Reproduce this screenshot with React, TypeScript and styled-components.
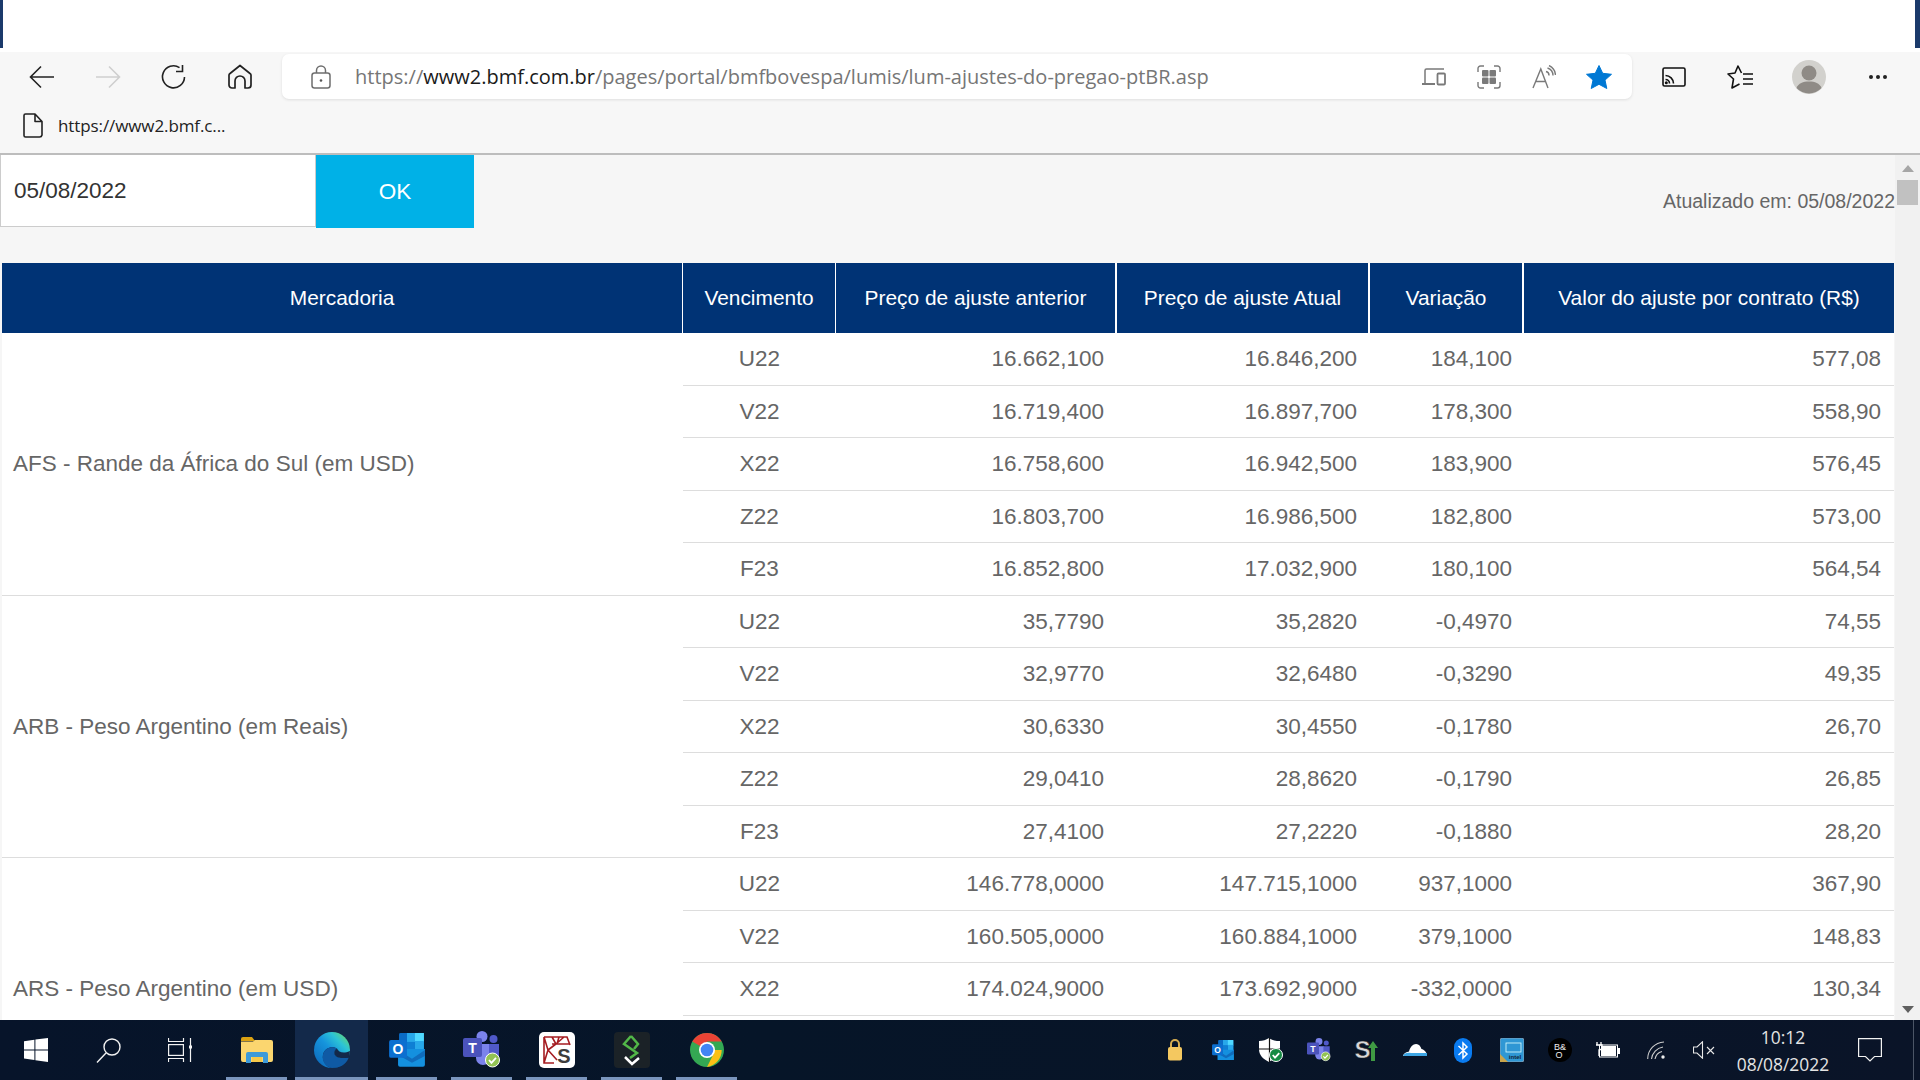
import React from 'react';
import styled, { createGlobalStyle } from 'styled-components';

const Global = createGlobalStyle`
  html, body { margin: 0; padding: 0; background: #fff; }
  * { box-sizing: border-box; }
`;

const Page = styled.div`
  width: 1920px; height: 1080px; display: flex; flex-direction: column; overflow: hidden;
  font-family: "Liberation Sans", Arial, sans-serif; background: #f6f6f6;
`;
const TitleStrip = styled.div`
  height: 52px; background: #fff; display: flex; justify-content: space-between; align-items: flex-start;
`;
const WindowEdge = styled.div<{ $w: number }>`
  width: ${p => p.$w}px; height: 48px; background: #1b3a6b;
`;
const Toolbar = styled.div`
  height: 50px; background: #f7f7f7; display: flex; align-items: flex-start; padding: 2px 0 0 9px;
`;
const NavButton = styled.div<{ $w?: number }>`
  width: ${p => p.$w ?? 66}px; height: 45px; display: flex; align-items: center; justify-content: center; flex: none;
`;
const AddressBar = styled.div`
  width: 1350px; height: 45px; margin: 0 9px; background: #fff; border-radius: 7px; flex: none;
  display: flex; align-items: center; box-shadow: 0 1px 3px rgba(0,0,0,.1); padding: 0 6px 0 20px;
`;
const LockCell = styled.div`
  width: 53px; display: flex; align-items: center; flex: none; padding-left: 9px;
`;
const UrlText = styled.div`
  flex: 1; font-family: "Open Sans", sans-serif; font-size: 20px; color: #767676; white-space: nowrap;
`;
const UrlHost = styled.span`
  color: #1a1a1a;
`;
const AddressAction = styled.div`
  width: 55px; height: 45px; display: flex; align-items: center; justify-content: center; flex: none;
`;
const FavBar = styled.div`
  height: 53px; background: #f7f7f7; display: flex; align-items: center; padding: 0 0 5px 23px; gap: 15px;
  border-bottom: 2px solid #bdbdbd;
`;
const FavText = styled.span`
  font-family: "Open Sans", sans-serif; font-size: 17px; color: #222; letter-spacing: -0.1px;
`;
const Viewport = styled.div`
  flex: 1; display: flex; min-height: 0; overflow: hidden;
`;
const Content = styled.div`
  width: 1895px; flex: none; background: #f6f6f6; overflow: hidden;
`;
const DateRow = styled.div`
  height: 108px; display: flex; align-items: flex-start;
`;
const DateInput = styled.div`
  width: 316px; height: 72px; background: #fff; border: 1px solid #ccc; border-top: 0; font-size: 22.5px; color: #333;
  display: flex; align-items: center; padding-left: 13px;
`;
const OkButton = styled.div`
  width: 158px; height: 73px; background: #00b1e7; color: #fff; font-size: 22.5px;
  display: flex; align-items: center; justify-content: center;
`;
const Updated = styled.div`
  margin-left: auto; padding-top: 33px; font-size: 19.5px; line-height: 26px; color: #666;
`;
const DataTable = styled.table`
  margin-left: 2px; width: 1892px; table-layout: fixed; border-collapse: separate; border-spacing: 0; background: #fff;
`;
const Th = styled.th<{ $rule: number }>`
  height: 70px; padding: 0; background: #003375; color: #fff; font-size: 20.9px; font-weight: 400; text-align: center;
  border-right: ${p => p.$rule}px solid #fff;
`;
const LabelCell = styled.td`
  padding: 1px 0 0 11px; font-size: 22.5px; color: #666; border-bottom: 1px solid #ddd; vertical-align: middle;
`;
const Row = styled.tr`
  height: 52.5px;
`;
const VencCell = styled.td`
  height: 52.5px; padding: 1px 0 0; font-size: 22.5px; color: #666; text-align: center; border-bottom: 1px solid #ddd;
`;
const Cell = styled.td<{ $pad: number }>`
  height: 52.5px; padding: 1px ${p => p.$pad}px 0 0; font-size: 22.5px; color: #666; text-align: right;
  border-bottom: 1px solid #ddd;
`;
const ScrollTrack = styled.div`
  flex: 1; background: #f1f1f1; display: flex; flex-direction: column; align-items: center; justify-content: space-between;
  padding: 10px 0 7px;
`;
const ScrollTop = styled.div`
  display: flex; flex-direction: column; align-items: center; gap: 8px;
`;
const ScrollThumb = styled.div`
  width: 21px; height: 25px; background: #c1c1c1;
`;
const ArrowUp = styled.div`
  width: 0; height: 0; border-left: 6px solid transparent; border-right: 6px solid transparent; border-bottom: 7px solid #a6a6a6;
`;
const ArrowDown = styled.div`
  width: 0; height: 0; border-left: 6px solid transparent; border-right: 6px solid transparent; border-top: 7px solid #606060;
`;
const Taskbar = styled.div`
  height: 60px; flex: none; background: linear-gradient(90deg, #07142a, #061528 40%, #0a1428); display: flex; align-items: stretch;
`;
const SystemButton = styled.div`
  width: 72px; display: flex; align-items: center; justify-content: center;
`;
const AppGap = styled.div`
  width: 3px;
`;
const AppTile = styled.div<{ $active?: boolean }>`
  position: relative; width: 73px; margin: 0 1px; display: flex; align-items: center; justify-content: center;
  background: ${p => (p.$active ? '#13294a' : 'transparent')};
`;
const Indicator = styled.div<{ $active?: boolean }>`
  position: absolute; bottom: 0; left: ${p => (p.$active ? 0 : '6px')}; right: ${p => (p.$active ? 0 : '6px')};
  height: 3px; background: #7a95bd;
`;
const TrayGap = styled.div`
  flex: 1;
`;
const TrayItem = styled.div`
  width: 48.1px; display: flex; align-items: center; justify-content: center; flex: none;
`;
const Clock = styled.div`
  width: 110px; flex: none; display: flex; flex-direction: column; align-items: center; justify-content: center;
  font-family: "Open Sans", sans-serif; font-size: 17.4px; line-height: 27px; color: #e4e4e4; padding-top: 1px;
`;
const NotifyButton = styled.div`
  width: 64px; flex: none; display: flex; align-items: center; justify-content: center;
`;
const DesktopEdge = styled.div`
  width: 1px; margin: 0 6px 0 11px; background: #4b5566;
`;

const Back = () => (
  <svg width="26" height="24" viewBox="0 0 26 24" fill="none" stroke="#222" strokeWidth="1.6"><path d="M1.5 12H25M12 1.5 1.5 12 12 22.5" /></svg>
);
const Forward = () => (
  <svg width="26" height="24" viewBox="0 0 26 24" fill="none" stroke="#cfcfcf" strokeWidth="1.6"><path d="M24.5 12H1M14 1.5 24.5 12 14 22.5" /></svg>
);
const Reload = () => (
  <svg width="26" height="26" viewBox="0 0 26 26" fill="none" stroke="#222" strokeWidth="1.6"><path d="M23.5 13A11 11 0 1 1 18.5 3.6M21.5 1v6.5H15" /></svg>
);
const Home = () => (
  <svg width="24" height="26" viewBox="0 0 24 26" fill="none" stroke="#222" strokeWidth="1.7" strokeLinejoin="round"><path d="M12 1.5 22 9.5a2 2 0 0 1 1 2V21a3 3 0 0 1-3 3h-3V17a5 5 0 0 0-10 0v7H4a3 3 0 0 1-3-3V11.500a2 2 0 0 1 1-2Z" /></svg>
);
const Lock = () => (
  <svg width="20" height="24" viewBox="0 0 20 24" fill="none" stroke="#6e6e6e" strokeWidth="1.5"><rect x="1" y="8" width="18" height="15" rx="2.500" /><path d="M5.500 8V5.500a4.500 4.500 0 0 1 9 0V8" /><circle cx="10" cy="15.500" r="1.300" fill="#555" stroke="none" /></svg>
);
const Devices = () => (
  <svg width="24" height="20" viewBox="0 0 24 20" fill="none" stroke="#7a7a7a" strokeWidth="1.500"><path d="M3 16V3.500A1.500 1.500 0 0 1 4.500 2H22" /><path d="M0 17h13" strokeWidth="2" /><rect x="15.500" y="6.500" width="7.500" height="11" rx="1" strokeWidth="1.800" /></svg>
);
const Collections = () => (
  <svg width="24" height="24" viewBox="0 0 24 24" fill="none" stroke="#7a7a7a" strokeWidth="1.400"><path d="M1 7V3.500A2.500 2.500 0 0 1 3.500 1H7M17 1h3.500A2.500 2.500 0 0 1 23 3.500V7M23 17v3.500a2.500 2.500 0 0 1-2.500 2.500H17M7 23H3.500A2.500 2.500 0 0 1 1 20.500V17" /><g fill="#7a7a7a" stroke="none"><rect x="5" y="5" width="6.500" height="6.500" rx="1" /><rect x="12.500" y="5" width="6.500" height="6.500" rx="1" /><rect x="5" y="12.500" width="6.500" height="6.500" rx="1" /><rect x="12.500" y="12.500" width="6.500" height="6.500" rx="1" /></g></svg>
);
const ReadAloud = () => (
  <svg width="24" height="24" viewBox="0 0 24 24" fill="none" stroke="#7a7a7a" strokeWidth="1.400"><path d="M1 23 8.800 4 16 23M3.800 16.500H13.500" /><path d="M14 6.500a4 4 0 0 1 3 4M15.500 3a8 8 0 0 1 5.500 7.500M17 .5a11.500 11.500 0 0 1 6.500 9.500" /></svg>
);
const StarFill = () => (
  <svg width="26" height="24" viewBox="0 0 26 24"><path d="M13 0.500 16.700 8.300 25.500 9.300 19 15.100 20.800 23.500 13 19.300 5.200 23.500 7 15.100 .5 9.300 9.300 8.300Z" fill="#0078d4" stroke="#0078d4" strokeLinejoin="round" /></svg>
);
const Cast = () => (
  <svg width="24" height="20" viewBox="0 0 24 20" fill="none" stroke="#111" strokeWidth="1.600"><rect x="1" y="1" width="22" height="18" rx="1.500" /><path d="M3.500 8.500a8 8 0 0 1 8 8M3.500 12.500a4 4 0 0 1 4 4" /><circle cx="4.300" cy="15.800" r="1.500" fill="#111" stroke="none" /></svg>
);
const FavList = () => (
  <svg width="26" height="24" viewBox="0 0 26 24" fill="none" stroke="#111" strokeWidth="1.600" strokeLinejoin="round"><path d="M14.500 8 11 1 8 8 1 9 6.500 14 5 23 12.500 19" /><path d="M16 9h10M16 14h10M16 19h10" /></svg>
);
const Avatar = () => (
  <svg width="34" height="34" viewBox="0 0 34 34"><circle cx="17" cy="17" r="17" fill="#d2d1cd" /><circle cx="17" cy="13" r="7.500" fill="#8f8b86" /><path d="M4.500 28C6.500 23 11 21.500 17 21.500S27.500 23 29.500 28A17 17 0 0 1 4.500 28Z" fill="#8f8b86" /></svg>
);
const Dots = () => (
  <svg width="20" height="6" viewBox="0 0 20 6" fill="#222"><circle cx="3" cy="3" r="2" /><circle cx="10" cy="3" r="2" /><circle cx="17" cy="3" r="2" /></svg>
);
const PageIcon = () => (
  <svg width="20" height="25" viewBox="0 0 20 25" fill="none" stroke="#222" strokeWidth="1.600" strokeLinejoin="round"><path d="M2.500 1H12L19 8.500V22A2.500 2.500 0 0 1 16.500 24h-14A1.500 1.500 0 0 1 1 22.500V2.500A1.500 1.500 0 0 1 2.500 1ZM12 1V8.500H19" /></svg>
);

const WinLogo = () => (
  <svg width="24" height="24" viewBox="0 0 24 24" fill="#fff"><path d="M0 3.300 10.400 1.800V11.400H0ZM11.400 1.600 24 0V11.400H11.400ZM0 12.500H10.400V22.100L0 20.600ZM11.400 12.500H24V24L11.400 22.300Z" /></svg>
);
const SearchIcon = () => (
  <svg width="25" height="25" viewBox="0 0 25 25" fill="none" stroke="#f2f2f2" strokeWidth="1.400"><circle cx="16" cy="9" r="8" /><path d="M10 15 1 24.500" /></svg>
);
const TaskView = () => (
  <svg width="24" height="24" viewBox="0 0 24 24" fill="none" stroke="#f2f2f2" strokeWidth="1.200"><path d="M0 3.500H16M.5 0v3.500M15.500 0v3.500M0 20.500H16M.5 24v-3.500M15.500 24v-3.500" /><rect x=".6" y="6.600" width="14.800" height="10.800" /><path d="M22.500 0V24" /><rect x="21" y="7.500" width="3" height="3" fill="#f2f2f2" stroke="none" /></svg>
);
const Explorer = () => (
  <svg width="32" height="26" viewBox="0 0 32 26"><path d="M0 2a2 2 0 0 1 2-2H11L14 4H0Z" fill="#dba212" /><path d="M0 4.500H12L14 3H30A2 2 0 0 1 32 5V23A2 2 0 0 1 30 25H2A2 2 0 0 1 0 23Z" fill="#fbd66f" /><path d="M5 26V17A2 2 0 0 1 7 15H25A2 2 0 0 1 27 17V26H22V20H10V26Z" fill="#3d9ad9" /><rect x="11" y="20" width="10" height="5" fill="#f6c949" /></svg>
);
const EdgeIcon = () => (
  <svg width="36" height="36" viewBox="0 0 36 36"><defs><linearGradient id="edgeA" x1="0" y1="1" x2="1" y2="0"><stop offset="0" stopColor="#0b62b5" /><stop offset=".5" stopColor="#1694dc" /><stop offset=".72" stopColor="#2cc3d6" /><stop offset="1" stopColor="#79dc4e" /></linearGradient></defs><circle cx="18" cy="18" r="18" fill="url(#edgeA)" /><path d="M36 19C36 24 30 26.500 25 25.500 19.500 24.500 19 19 23 16.500 19 14 11 14.500 9 22.500 7.500 30 14 36 18 36 25 36 32 33 34.500 26 35.500 24 36 21 36 19Z" fill="#13294a" /><path d="M9 22.500C11 14.500 19 14 23 16.500 19 19 19.500 24.500 25 25.500 30 26.500 33 25.500 34.500 26 32 33 25 36 18 36 12 35 7.500 30 9 22.500Z" fill="#0f5aa4" /><path d="M34.500 26C33 25 29.500 27 25 25.500 19.500 24.500 19 19 23 16.500 24 19 27 21 31 20.500 33 20.500 35.500 19 36 19Z" fill="#13294a" /></svg>
);
const OutlookIcon = ({ s = 36 }: { s?: number }) => (
  <svg width={s} height={s * 0.94} viewBox="0 0 36 34"><rect x="10" y="0" width="25" height="18" rx="1.500" fill="#0a6bc4" /><rect x="18" y="0" width="9" height="9" fill="#28a8ea" /><rect x="26" y="0" width="9" height="9" fill="#50d9ff" /><rect x="26" y="8" width="9" height="10" fill="#28a8ea" /><rect x="18" y="9" width="8" height="9" fill="#0f7fd4" /><path d="M9 16H36V32A2 2 0 0 1 34 34H11A2 2 0 0 1 9 32Z" fill="#1490df" /><path d="M9 17 23 26 36 17V23L23 30 9 22Z" fill="#0f6cbd" /><rect x="0" y="7" width="18" height="18" rx="2" fill="#0c6fd0" /><text x="9" y="21.500" textAnchor="middle" fontFamily="Liberation Sans, sans-serif" fontWeight="700" fontSize="14" fill="#fff">O</text></svg>
);
const CheckBadge = ({ x, y, r, c }: { x: number; y: number; r: number; c: string }) => (
  <g><circle cx={x} cy={y} r={r} fill={c} stroke="#fff" strokeWidth="1" /><path d={`M${x - r * 0.5} ${y} l${r * 0.35} ${r * 0.4} l${r * 0.65} -${r * 0.7}`} fill="none" stroke="#fff" strokeWidth="1.800" /></g>
);
const TeamsIcon = ({ s = 38 }: { s?: number }) => (
  <svg width={s} height={s} viewBox="0 0 38 38"><circle cx="19" cy="5.500" r="5.500" fill="#7b83eb" /><circle cx="30.500" cy="8" r="4" fill="#5059c9" /><path d="M13 13H27V27A7 7 0 0 1 13 27Z" fill="#7b83eb" /><path d="M26 13H36V24A5 5 0 0 1 26 24Z" fill="#5059c9" /><rect x="0" y="7" width="19" height="19" rx="2" fill="#4b53bc" /><text x="9.500" y="22" textAnchor="middle" fontFamily="Liberation Sans, sans-serif" fontWeight="700" fontSize="14" fill="#fff">T</text><CheckBadge x={29.500} y={29} r={7} c="#92c353" /></svg>
);
const SketchIcon = () => (
  <svg width="36" height="36" viewBox="0 0 36 36"><rect width="36" height="36" rx="5" fill="#fff" /><g fill="none" stroke="#a51d22" strokeWidth="1.600"><path d="M5 5H28L31 13M5 5V31H15M5 5 9 18 5 31M13 5 17 12 9 18M9 18 18 28M17 12 25 5M13 12H30M20 5 18 12" /></g><text x="25" y="31" textAnchor="middle" fontFamily="Liberation Sans, sans-serif" fontWeight="700" fontSize="20" fill="#3c3c3c">S</text></svg>
);
const SicrediIcon = () => (
  <svg width="36" height="36" viewBox="0 0 36 36"><rect width="36" height="36" rx="4" fill="#1b2227" /><path d="M17 4 10 12 23 21 16 26" fill="none" stroke="#52b848" strokeWidth="2.500" /><path d="M17 4 24 12 20 17" fill="none" stroke="#52b848" strokeWidth="2.500" /><path d="M11 25 18 32 25 26" fill="none" stroke="#fff" strokeWidth="2.500" /></svg>
);
const ChromeIcon = () => (
  <svg width="34" height="34" viewBox="0 0 34 34"><circle cx="17" cy="17" r="17" fill="#34a853" /><path d="M17 17 2.300 8.500A17 17 0 0 1 31.700 8.500H17Z" fill="#ea4335" /><path d="M17 17H31.700 A17 17 0 0 1 17 34L24 20Z" fill="#fbc116" /><circle cx="17" cy="17" r="8" fill="#fff" /><circle cx="17" cy="17" r="6.300" fill="#4285f4" /></svg>
);
const LockTray = () => (
  <svg width="14" height="22" viewBox="0 0 14 22"><path d="M3 9V5a4 4 0 0 1 8 0v4" fill="none" stroke="#d8ae50" strokeWidth="2" /><rect x="0" y="8" width="14" height="13.500" rx="2" fill="#f4c860" /></svg>
);
const ShieldTray = () => (
  <svg width="24" height="24" viewBox="0 0 24 24"><path d="M0 3C4 3 7 2 10 0 13 2 16 3 21 3V11C21 17 16 21 10 24 4 21 0 17 0 11Z" fill="#fff" /><path d="M10.500 0V24M0 11H21" stroke="#111" strokeWidth="1.200" /><CheckBadge x={17} y={17} r={6.500} c="#148a43" /></svg>
);
const STray = () => (
  <svg width="24" height="24" viewBox="0 0 24 24"><text x="7.500" y="20" textAnchor="middle" fontFamily="Liberation Sans, sans-serif" fontWeight="700" fontSize="24" fill="#d8d8d8" stroke="#222" strokeWidth=".5">S</text><path d="M16 23V10H13L18 3 23 10H20V23Z" fill="#3f9a43" /></svg>
);
const CloudTray = () => (
  <svg width="24" height="12" viewBox="0 0 24 12"><path d="M0 12C1 8.500 4 8 6 7.500 7 3 10 0 13 0 17 0 18 4 18.500 5 21 5.500 24 8 24 12Z" fill="#fff" /><path d="M0 12C1 9 4 8.500 8 9H24V12Z" fill="#3ea6e4" /></svg>
);
const BtTray = () => (
  <svg width="18" height="25" viewBox="0 0 18 25"><rect width="18" height="25" rx="9" fill="#0a7bf0" /><path d="M4.500 8 13 16 9 20V5L13 9 4.500 17" fill="none" stroke="#fff" strokeWidth="1.500" /></svg>
);
const IntelTray = () => (
  <svg width="24" height="24" viewBox="0 0 24 24"><rect width="24" height="24" rx="2.500" fill="#2f97d4" stroke="#9ab" strokeWidth=".8" /><rect x="6" y="5" width="15" height="9" fill="none" stroke="#dff" strokeWidth=".8" /><path d="M0 24V16L8 24Z" fill="#c9a44c" /><text x="15" y="21" textAnchor="middle" fontFamily="Liberation Sans, sans-serif" fontSize="6" fontWeight="700" fill="#123">intel</text></svg>
);
const BoTray = () => (
  <svg width="24" height="24" viewBox="0 0 24 24"><circle cx="12" cy="12" r="12" fill="#000" /><text x="12" y="12" textAnchor="middle" fontFamily="Liberation Sans, sans-serif" fontSize="9" fill="#eee">B&amp;</text><text x="11" y="20" textAnchor="middle" fontFamily="Liberation Sans, sans-serif" fontSize="9" fill="#eee">O</text></svg>
);
const BatteryTray = () => (
  <svg width="24" height="16" viewBox="0 0 24 16"><path d="M1 0V3M5 0V3M0 3H6V6C6 7 4 8 3 8V14" fill="none" stroke="#fff" strokeWidth="1.300" /><rect x="3.500" y="3" width="18" height="12" fill="none" stroke="#fff" strokeWidth="1" /><rect x="5" y="4" width="15" height="10" fill="#fff" /><rect x="22" y="6" width="2" height="6" fill="#fff" /></svg>
);
const WifiTray = () => (
  <svg width="18" height="18" viewBox="0 0 18 18" fill="none" stroke="#ccc" strokeWidth="1.100"><path d="M.7 18A17 17 0 0 1 17 1M4.500 18A13.500 13.500 0 0 1 16 6M8 18A9.500 9.500 0 0 1 15 10.500" /><circle cx="16" cy="16" r="1.700" fill="#eee" stroke="none" /></svg>
);
const MuteTray = () => (
  <svg width="22" height="18" viewBox="0 0 22 18" fill="none" stroke="#e8e8e8" strokeWidth="1.100"><path d="M.5 6H4L9.500 .8V17.200L4 12H.5Z" /><path d="M14 6 21 13M21 6 14 13" /></svg>
);
const Notify = () => (
  <svg width="24" height="24" viewBox="0 0 24 24" fill="none" stroke="#f2f2f2" strokeWidth="1.200"><path d="M.6.6H23.400V18.500H16.500L12 23 7.500 18.500H.6Z" /></svg>
);

type Group = { name: string; rows: [string, string, string, string, string][] };
const groups: Group[] = [
  { name: 'AFS - Rande da África do Sul (em USD)', rows: [
    ['U22', '16.662,100', '16.846,200', '184,100', '577,08'],
    ['V22', '16.719,400', '16.897,700', '178,300', '558,90'],
    ['X22', '16.758,600', '16.942,500', '183,900', '576,45'],
    ['Z22', '16.803,700', '16.986,500', '182,800', '573,00'],
    ['F23', '16.852,800', '17.032,900', '180,100', '564,54'],
  ] },
  { name: 'ARB - Peso Argentino (em Reais)', rows: [
    ['U22', '35,7790', '35,2820', '-0,4970', '74,55'],
    ['V22', '32,9770', '32,6480', '-0,3290', '49,35'],
    ['X22', '30,6330', '30,4550', '-0,1780', '26,70'],
    ['Z22', '29,0410', '28,8620', '-0,1790', '26,85'],
    ['F23', '27,4100', '27,2220', '-0,1880', '28,20'],
  ] },
  { name: 'ARS - Peso Argentino (em USD)', rows: [
    ['U22', '146.778,0000', '147.715,1000', '937,1000', '367,90'],
    ['V22', '160.505,0000', '160.884,1000', '379,1000', '148,83'],
    ['X22', '174.024,9000', '173.692,9000', '-332,0000', '130,34'],
    ['', '', '', '', ''],
    ['', '', '', '', ''],
  ] },
];
const headers = ['Mercadoria', 'Vencimento', 'Preço de ajuste anterior', 'Preço de ajuste Atual', 'Variação', 'Valor do ajuste por contrato (R$)'];
const rules = [1, 1, 2, 2, 2, 0];
const widths = [681, 153, 281, 253, 154, 370];
const pads = [13, 13, 12, 13];

export default function App() {
  return (
    <Page>
      <Global />
      <TitleStrip><WindowEdge $w={3} /><WindowEdge $w={5} /></TitleStrip>
      <Toolbar>
        <NavButton><Back /></NavButton>
        <NavButton><Forward /></NavButton>
        <NavButton><Reload /></NavButton>
        <NavButton><Home /></NavButton>
        <AddressBar>
          <LockCell><Lock /></LockCell>
          <UrlText>https://<UrlHost>www2.bmf.com.br</UrlHost>/pages/portal/bmfbovespa/lumis/lum-ajustes-do-pregao-ptBR.asp</UrlText>
          <AddressAction><Devices /></AddressAction>
          <AddressAction><Collections /></AddressAction>
          <AddressAction><ReadAloud /></AddressAction>
          <AddressAction><StarFill /></AddressAction>
        </AddressBar>
        <NavButton><Cast /></NavButton>
        <NavButton><FavList /></NavButton>
        <NavButton $w={72}><Avatar /></NavButton>
        <NavButton><Dots /></NavButton>
      </Toolbar>
      <FavBar><PageIcon /><FavText>https://www2.bmf.c...</FavText></FavBar>
      <Viewport>
        <Content>
          <DateRow>
            <DateInput>05/08/2022</DateInput>
            <OkButton>OK</OkButton>
            <Updated>Atualizado em: 05/08/2022</Updated>
          </DateRow>
          <DataTable>
            <colgroup>{widths.map((w, i) => <col key={i} style={{ width: w }} />)}</colgroup>
            <thead><tr>{headers.map((h, i) => <Th key={h} $rule={rules[i]}>{h}</Th>)}</tr></thead>
            <tbody>
              {groups.map(g => g.rows.map((r, i) => (
                <Row key={g.name + i}>
                  {i === 0 && <LabelCell rowSpan={g.rows.length}>{g.name}</LabelCell>}
                  <VencCell>{r[0]}</VencCell>
                  {r.slice(1).map((v, j) => <Cell key={j} $pad={pads[j]}>{v}</Cell>)}
                </Row>
              )))}
            </tbody>
          </DataTable>
        </Content>
        <ScrollTrack>
          <ScrollTop><ArrowUp /><ScrollThumb /></ScrollTop>
          <ArrowDown />
        </ScrollTrack>
      </Viewport>
      <Taskbar>
        <SystemButton><WinLogo /></SystemButton>
        <SystemButton><SearchIcon /></SystemButton>
        <SystemButton><TaskView /></SystemButton>
        <AppGap />
        <AppTile><Explorer /><Indicator /></AppTile>
        <AppTile $active><EdgeIcon /><Indicator $active /></AppTile>
        <AppTile><OutlookIcon /><Indicator /></AppTile>
        <AppTile><TeamsIcon /><Indicator /></AppTile>
        <AppTile><SketchIcon /><Indicator /></AppTile>
        <AppTile><SicrediIcon /><Indicator /></AppTile>
        <AppTile><ChromeIcon /><Indicator /></AppTile>
        <TrayGap />
        <TrayItem><LockTray /></TrayItem>
        <TrayItem><OutlookIcon s={22} /></TrayItem>
        <TrayItem><ShieldTray /></TrayItem>
        <TrayItem><TeamsIcon s={24} /></TrayItem>
        <TrayItem><STray /></TrayItem>
        <TrayItem><CloudTray /></TrayItem>
        <TrayItem><BtTray /></TrayItem>
        <TrayItem><IntelTray /></TrayItem>
        <TrayItem><BoTray /></TrayItem>
        <TrayItem><BatteryTray /></TrayItem>
        <TrayItem><WifiTray /></TrayItem>
        <TrayItem><MuteTray /></TrayItem>
        <Clock><span>10:12</span><span>08/08/2022</span></Clock>
        <NotifyButton><Notify /></NotifyButton>
        <DesktopEdge />
      </Taskbar>
    </Page>
  );
}
